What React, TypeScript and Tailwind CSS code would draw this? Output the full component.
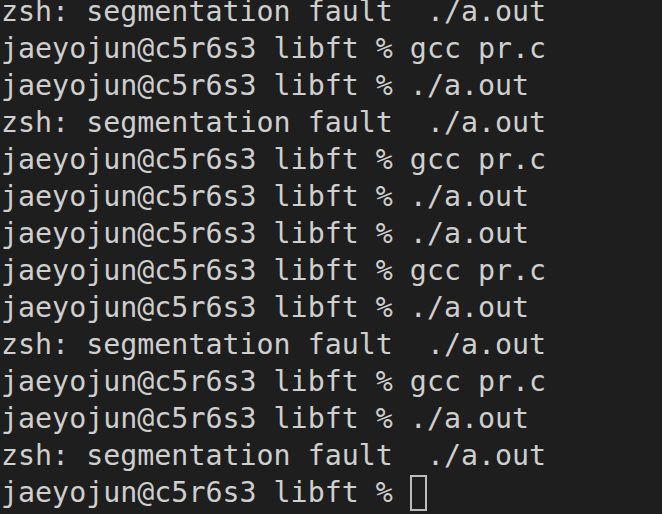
const lines = [
  'zsh: segmentation fault  ./a.out',
  'jaeyojun@c5r6s3 libft % gcc pr.c',
  'jaeyojun@c5r6s3 libft % ./a.out',
  'zsh: segmentation fault  ./a.out',
  'jaeyojun@c5r6s3 libft % gcc pr.c',
  'jaeyojun@c5r6s3 libft % ./a.out',
  'jaeyojun@c5r6s3 libft % ./a.out',
  'jaeyojun@c5r6s3 libft % gcc pr.c',
  'jaeyojun@c5r6s3 libft % ./a.out',
  'zsh: segmentation fault  ./a.out',
  'jaeyojun@c5r6s3 libft % gcc pr.c',
  'jaeyojun@c5r6s3 libft % ./a.out',
  'zsh: segmentation fault  ./a.out',
];

const App = () => {
  return (
    <div className="w-[662px] h-[514px] bg-[#1e1e1e] overflow-hidden">
      <div className="mt-[-7px] pl-[1px] text-[#cfcfcf] text-[28.3px] leading-[37px] font-['DejaVu_Sans_Mono',monospace] whitespace-pre">
        {lines.map((line, i) => (
          <div key={i}>{line}</div>
        ))}
        <div className="flex items-center">
          <span>jaeyojun@c5r6s3 libft % </span>
          <span className="w-[17px] h-[36px] border-2 border-[#bdbdbd]" />
        </div>
      </div>
    </div>
  );
};

export default App;
